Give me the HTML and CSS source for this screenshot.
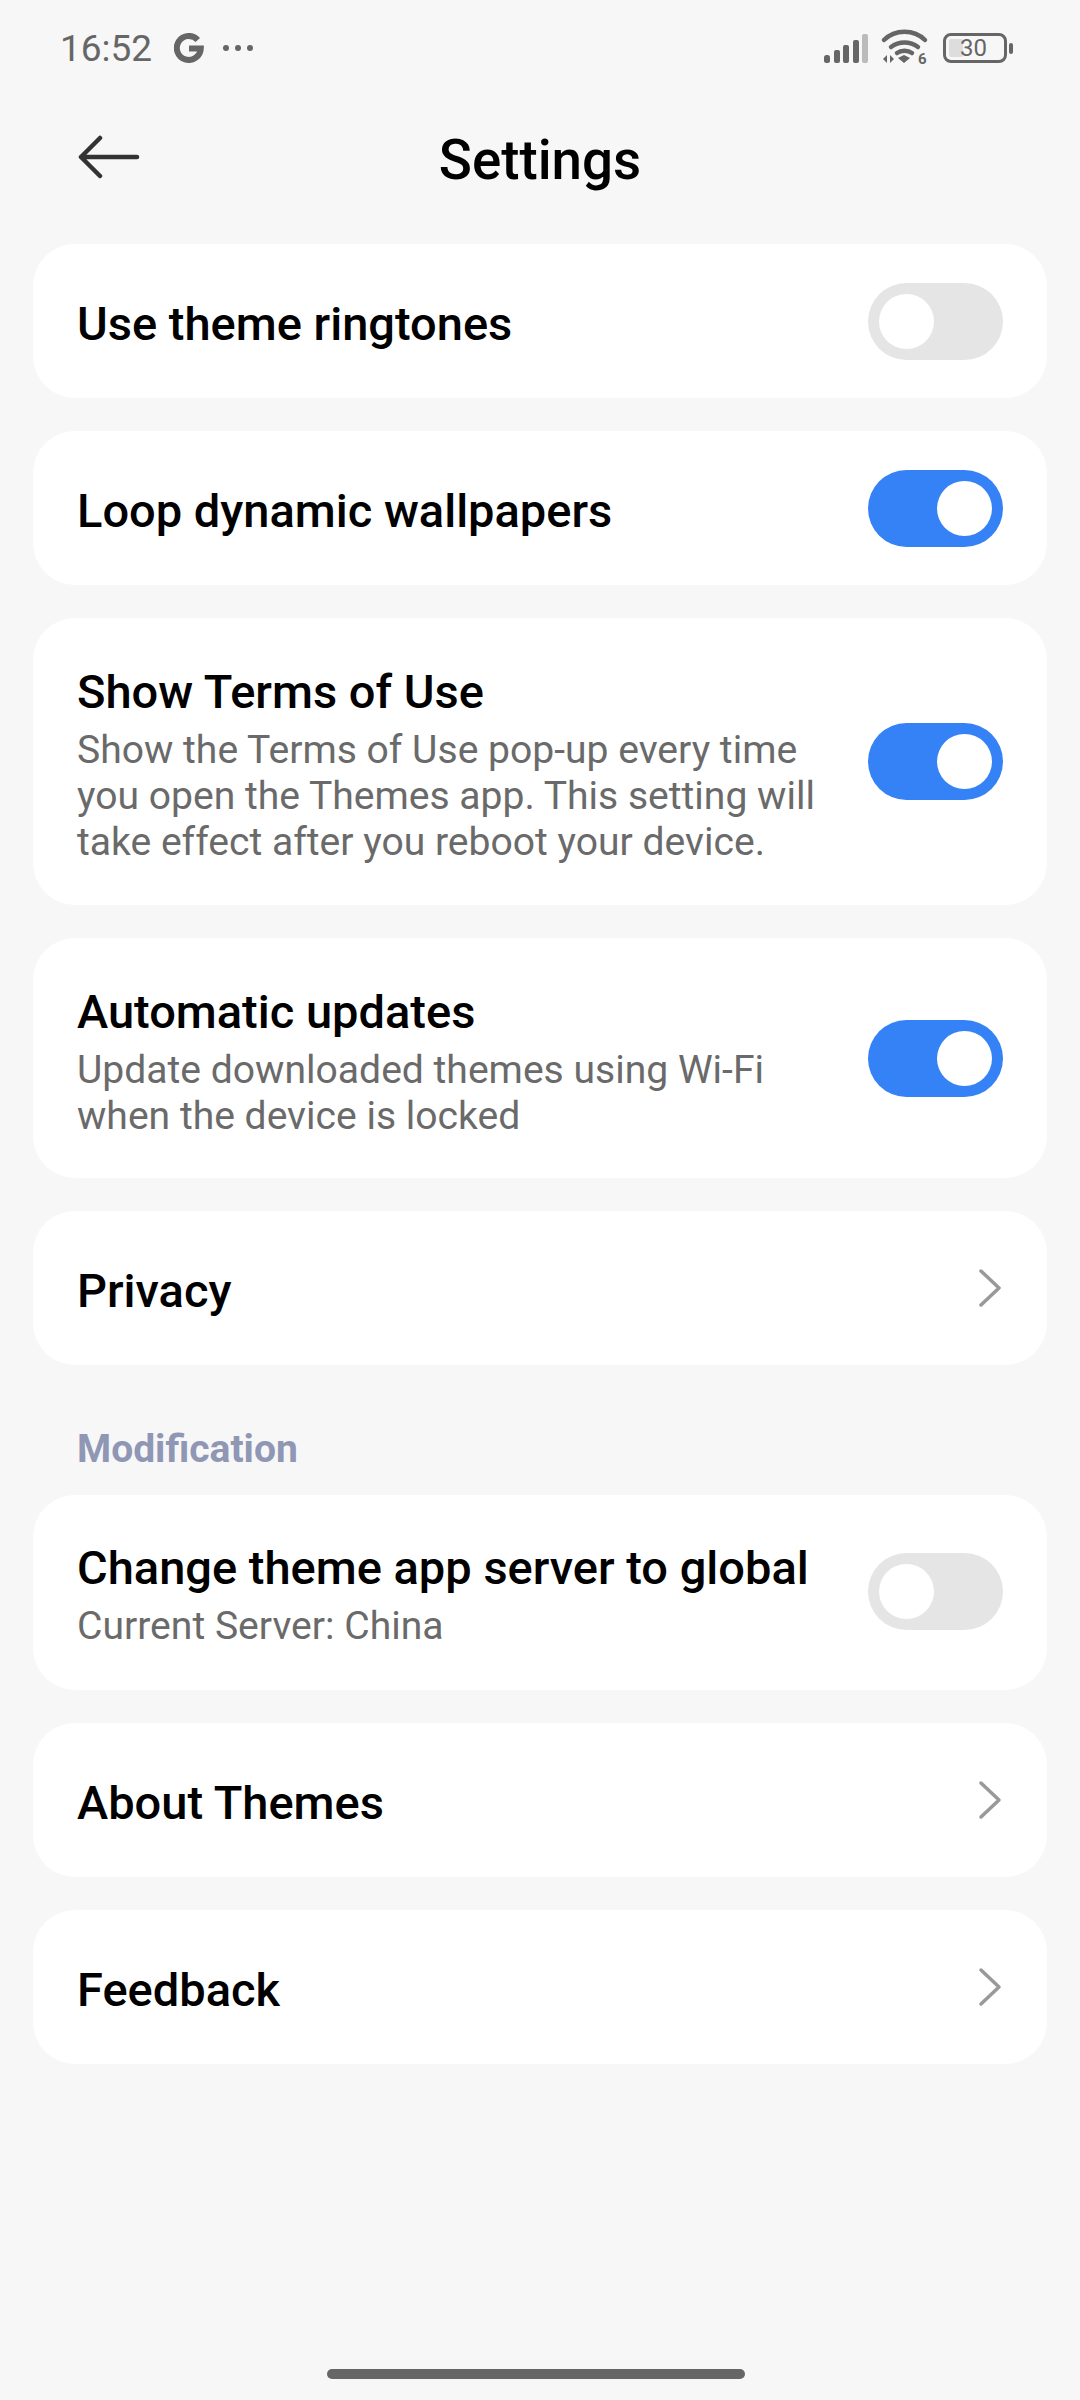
FILE: index.html
```html
<!DOCTYPE html>
<html lang="en">
<head>
  <meta charset="UTF-8">
  <title>Settings</title>
  <link rel="stylesheet" href="styles.css">
</head>
<body>
  <div class="status-bar">
    <div class="status-left">
      <span class="time">16:52</span>
      <svg class="g-icon" width="30" height="30" viewBox="0 0 30 30"><path d="M23.800 7A12 12 0 1 0 26.800 15.500H15" fill="none" stroke="#666" stroke-width="6"/></svg>
      <svg class="dots" width="30" height="10" viewBox="0 0 30 10"><circle cx="3" cy="5" r="3" fill="#666"/><circle cx="15" cy="5" r="3" fill="#666"/><circle cx="27" cy="5" r="3" fill="#666"/></svg>
    </div>
    <div class="status-right">
      <svg width="44" height="29" viewBox="0 0 44 29"><rect x="0" y="21" width="6" height="8" rx="2.500" fill="#666"/><rect x="10" y="16" width="6" height="13" rx="2" fill="#666"/><rect x="19" y="11" width="6" height="18" rx="2" fill="#666"/><rect x="29" y="6" width="6" height="23" rx="2" fill="#666"/><rect x="38" y="0" width="6" height="29" rx="2" fill="#bbb"/></svg>
      <svg class="wifi" width="47" height="36" viewBox="0 0 47 36"><path d="M3 10C14 -1 33 -1 44 10M10 17c8-6 19-6 27 0M16 23c4-3 11-3 15 0" fill="none" stroke="#666" stroke-width="4.500" stroke-linecap="round"/><path d="M17 28l6-3 6 3-6 5z" fill="#666"/><path d="M6 25v8l-4-4zM9 25l4 4-4 4z" fill="#666"/><text x="37" y="34" class="wifi-six">6</text></svg>
      <div class="battery">
        <div class="battery-body"><div class="battery-fill"></div><span class="battery-text">30</span></div>
        <div class="battery-cap"></div>
      </div>
    </div>
  </div>

  <header class="header">
    <svg class="back" width="62" height="44" viewBox="0 0 62 44"><path d="M3 22H59M22 3L3 22l19 19" fill="none" stroke="#333" stroke-width="4.500" stroke-linecap="round" stroke-linejoin="round"/></svg>
    <h1>Settings</h1>
  </header>

  <main>
    <div class="card row-short">
      <div class="text"><div class="title">Use theme ringtones</div></div>
      <div class="toggle"></div>
    </div>
    <div class="card row-short">
      <div class="text"><div class="title">Loop dynamic wallpapers</div></div>
      <div class="toggle on"></div>
    </div>
    <div class="card row-tall row-terms">
      <div class="text">
        <div class="title">Show Terms of Use</div>
        <div class="sub">Show the Terms of Use pop-up every time you open the Themes app. This setting will take effect after you reboot your device.</div>
      </div>
      <div class="toggle on"></div>
    </div>
    <div class="card row-tall">
      <div class="text">
        <div class="title">Automatic updates</div>
        <div class="sub">Update downloaded themes using Wi-Fi when the device is locked</div>
      </div>
      <div class="toggle on"></div>
    </div>
    <div class="card row-short">
      <div class="text"><div class="title">Privacy</div></div>
      <svg class="chevron" width="26" height="40" viewBox="0 0 26 40"><path d="M4 3l18 17L4 37" fill="none" stroke="#999" stroke-width="3.500" stroke-linecap="round" stroke-linejoin="round"/></svg>
    </div>

    <h2 class="section">Modification</h2>

    <div class="card row-tall row-server">
      <div class="text">
        <div class="title">Change theme app server to global</div>
        <div class="sub">Current Server: China</div>
      </div>
      <div class="toggle"></div>
    </div>
    <div class="card row-short">
      <div class="text"><div class="title">About Themes</div></div>
      <svg class="chevron" width="26" height="40" viewBox="0 0 26 40"><path d="M4 3l18 17L4 37" fill="none" stroke="#999" stroke-width="3.500" stroke-linecap="round" stroke-linejoin="round"/></svg>
    </div>
    <div class="card row-short">
      <div class="text"><div class="title">Feedback</div></div>
      <svg class="chevron" width="26" height="40" viewBox="0 0 26 40"><path d="M4 3l18 17L4 37" fill="none" stroke="#999" stroke-width="3.500" stroke-linecap="round" stroke-linejoin="round"/></svg>
    </div>
  </main>

  <div class="home-bar"></div>
</body>
</html>
```

FILE: styles.css
```css
* {
  margin: 0;
  padding: 0;
  box-sizing: border-box;
}
body {
  font-family: 'Roboto', sans-serif;
  background: #f7f7f7;
  color: #000;
  width: 1080px;
  height: 2400px;
  position: relative;
  overflow: hidden;
}
.status-bar {
  height: 96px;
  padding: 0 67px 0 60px;
  display: flex;
  align-items: center;
  justify-content: space-between;
}
.status-left {
  display: flex;
  align-items: center;
}
.time {
  font-size: 37px;
  color: #666;
}
.g-icon {
  margin-left: 22px;
}
.dots {
  margin-left: 19px;
}
.status-right {
  display: flex;
  align-items: center;
  gap: 13px;
}
.wifi {
  overflow: visible;
}
.wifi-six {
  font-family: 'Roboto', sans-serif;
  font-size: 15px;
  font-weight: 700;
  fill: #666;
}
.battery {
  display: flex;
  align-items: center;
  gap: 2px;
  margin-left: 2px;
}
.battery-body {
  width: 64px;
  height: 30px;
  border: 3px solid #666;
  border-radius: 8px;
  position: relative;
  padding: 3px;
}
.battery-fill {
  width: 14px;
  height: 100%;
  background: #ddd;
  border-radius: 2px;
}
.battery-text {
  position: absolute;
  left: 14px;
  top: -3px;
  font-size: 24px;
  line-height: 30px;
  color: #666;
}
.battery-cap {
  width: 4px;
  height: 11px;
  background: #666;
  border-radius: 3px;
}
.header {
  height: 125px;
  padding: 0 0 4px 78px;
  display: flex;
  align-items: center;
  position: relative;
}
.header h1 {
  position: absolute;
  left: 0;
  right: 0;
  padding-top: 6px;
  text-align: center;
  font-size: 54.700px;
  font-weight: 500;
  color: #000;
}
main {
  padding: 23px 33px 0 33px;
  display: flex;
  flex-direction: column;
  gap: 33px;
}
.card {
  background: #fff;
  border-radius: 42px;
  padding: 0 44px;
  display: flex;
  align-items: center;
  justify-content: space-between;
}
.row-short {
  height: 154px;
}
.row-short .title {
  padding-top: 6px;
}
.row-tall {
  padding-top: 46px;
  padding-bottom: 39px;
}
.row-tall .toggle {
  margin-top: -7px;
}
.row-terms {
  padding-bottom: 40px;
}
.row-server {
  padding-top: 45px;
  padding-bottom: 41px;
}
.text {
  flex: 1;
  max-width: 745px;
}
.title {
  font-size: 47px;
  font-weight: 500;
  line-height: 56px;
  color: #000;
}
.sub {
  margin-top: 7px;
  font-size: 39.100px;
  line-height: 46px;
  color: #6a6a6a;
}
.toggle {
  width: 135px;
  height: 77px;
  border-radius: 39px;
  background: #e5e5e5;
  padding: 11px;
  display: flex;
  flex-shrink: 0;
}
.toggle::after {
  content: "";
  width: 55px;
  height: 55px;
  border-radius: 50%;
  background: #fff;
}
.toggle.on {
  background: #3482f6;
  justify-content: flex-end;
}
.section {
  font-size: 39px;
  font-weight: 700;
  color: #8f97b5;
  padding-left: 44px;
  margin-top: 28px;
  margin-bottom: -10px;
  line-height: 46px;
}
.home-bar {
  position: absolute;
  left: 327px;
  top: 2369px;
  width: 418px;
  height: 10px;
  border-radius: 5px;
  background: #666;
}
```
